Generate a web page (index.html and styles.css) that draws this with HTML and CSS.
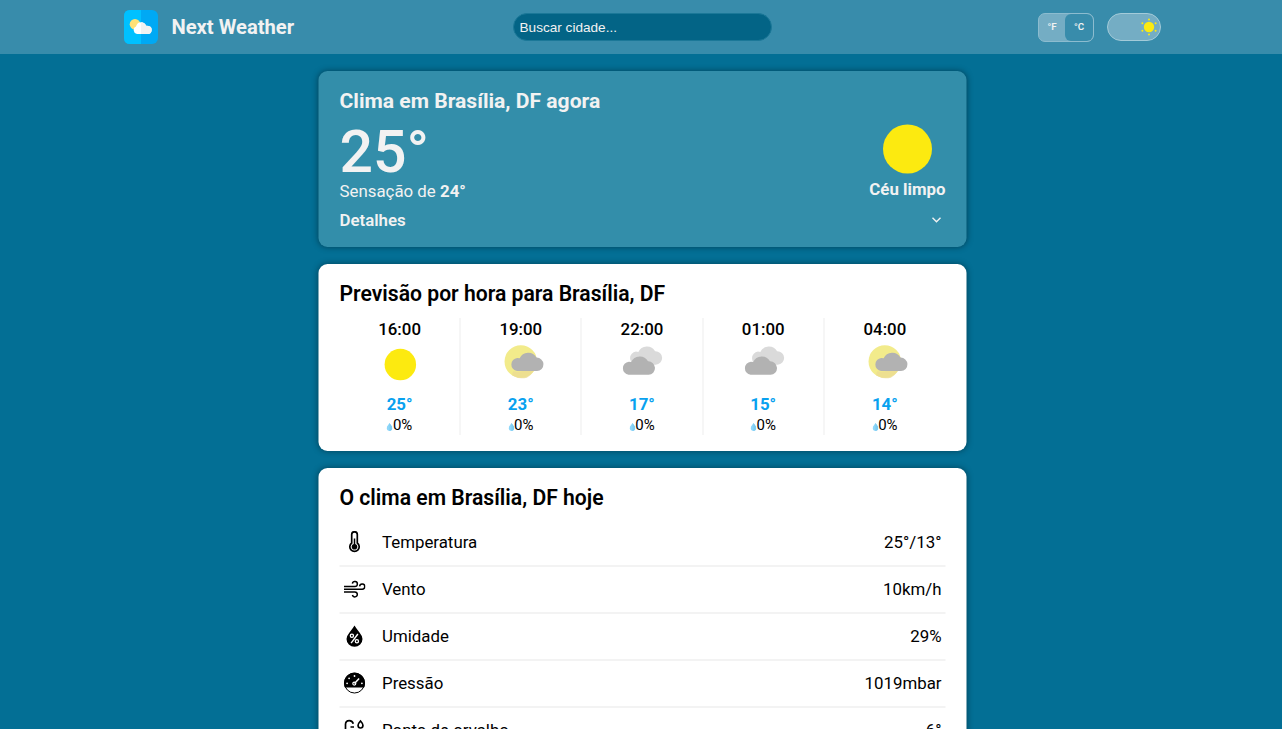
FILE: index.html
```html
<!DOCTYPE html>
<html lang="pt-BR">
<head>
<meta charset="utf-8">
<title>Next Weather</title>
<link rel="stylesheet" href="styles.css">
</head>
<body>
<svg class="defs" width="0" height="0" aria-hidden="true">
  <symbol id="cloud" viewBox="0 0 33 20" overflow="visible"><path d="M6.5 19.5A6.3 6.3 0 0 1 6.7 7 Q8 7 9 7.4A9 9 0 0 1 25 6.7A6.4 6.4 0 1 1 25.5 19.5Z"/></symbol>
  <symbol id="sun" viewBox="0 0 40 40"><circle cx="20.8" cy="20.5" r="15" fill="#fcea10"/></symbol>
  <symbol id="partly" viewBox="0 0 40 40" overflow="visible"><circle cx="20.3" cy="17.6" r="15.5" fill="#f2eb8b"/><path d="M13 27Q24 29 33 21Q34 29 26 33Q19 35 12 31Z" fill="#ebdc91" opacity=".8"/><use href="#cloud" x="10.2" y="7.2" width="33" height="20" fill="#b2b2b2"/></symbol>
  <symbol id="clouds" viewBox="0 0 40 40" overflow="visible"><use href="#cloud" x="8" y="1.2" width="33" height="20" fill="#dadada"/><use href="#cloud" x="1.2" y="10.8" width="33" height="20" fill="#b2b2b2"/></symbol>
  <symbol id="drop" viewBox="0 0 6 8"><path d="M3 0L5.4 3.5Q6.5 6 4.6 7.5Q3 8.4 1.4 7.5Q-.5 6 .6 3.5Z" fill="#8dd6f9"/><path d="M3 0L5.4 3.5Q6.3 6 4.4 7.6L3 8Z" fill="#7dcbef"/></symbol>
</svg>
<header class="header">
  <div class="brand">
    <svg class="logo" viewBox="0 0 34 34"><rect width="34" height="34" rx="6" fill="#00a9f4"/><path d="M17 0H6Q0 0 0 6V28Q0 34 6 34H17Z" fill="#00c1ff"/><circle cx="11" cy="14.2" r="5.3" fill="#ffe177"/><path d="M13 24A3.9 3.9 0 0 1 12 16.6Q13.2 12.2 17 12.2Q21 12.3 22 15.8Q27.8 15.6 27.7 20Q27.4 24 24 24Z" fill="#fff"/><path d="M17 12.2Q21 12.3 22 15.8Q27.8 15.6 27.7 20Q27.4 24 24 24H17Z" fill="#f2f2f2"/></svg>
    <h1 class="brand-name">Next Weather</h1>
  </div>
  <input class="search" type="text" placeholder="Buscar cidade...">
  <div class="controls">
    <div class="units"><span class="unit">°F</span><span class="unit unit-active">°C</span></div>
    <div class="theme"><svg class="theme-icon" viewBox="0 0 18 18" fill="#fcea10"><circle cx="9" cy="9" r="5.2"/><circle cx="9" cy="1.5" r="1"/><circle cx="9" cy="16.5" r="1"/><circle cx="2.4" cy="5.2" r="1"/><circle cx="15.6" cy="5.2" r="1"/><circle cx="2.4" cy="12.8" r="1"/><circle cx="15.6" cy="12.8" r="1"/></svg></div>
  </div>
</header>
<main class="main">
  <section class="card card-now">
    <h2 class="title title-now">Clima em Brasília, DF agora</h2>
    <div class="now">
      <div>
        <div class="now-temp">25°</div>
        <div class="feels">Sensação de <b>24°</b></div>
      </div>
      <div class="condition">
        <svg class="condition-icon" viewBox="0 0 50 50"><circle cx="25" cy="25" r="24.5" fill="#fcea10"/></svg>
        <b>Céu limpo</b>
      </div>
    </div>
    <div class="details"><span>Detalhes</span><svg class="chevron" viewBox="0 0 10 6"><path d="M1 .8L5 4.8L9 .8" fill="none" stroke="#f2f2f2" stroke-width="1.4"/></svg></div>
  </section>
  <section class="card card-hourly">
    <h2 class="title">Previsão por hora para Brasília, DF</h2>
    <div class="hours">
      <div class="hour"><span class="time">16:00</span><svg class="hour-icon"><use href="#sun"/></svg><b class="temp">25°</b><span class="rain"><svg class="drop"><use href="#drop"/></svg>0%</span></div>
      <div class="hour"><span class="time">19:00</span><svg class="hour-icon"><use href="#partly"/></svg><b class="temp">23°</b><span class="rain"><svg class="drop"><use href="#drop"/></svg>0%</span></div>
      <div class="hour"><span class="time">22:00</span><svg class="hour-icon"><use href="#clouds"/></svg><b class="temp">17°</b><span class="rain"><svg class="drop"><use href="#drop"/></svg>0%</span></div>
      <div class="hour"><span class="time">01:00</span><svg class="hour-icon"><use href="#clouds"/></svg><b class="temp">15°</b><span class="rain"><svg class="drop"><use href="#drop"/></svg>0%</span></div>
      <div class="hour"><span class="time">04:00</span><svg class="hour-icon"><use href="#partly"/></svg><b class="temp">14°</b><span class="rain"><svg class="drop"><use href="#drop"/></svg>0%</span></div>
    </div>
  </section>
  <section class="card card-today">
    <h2 class="title">O clima em Brasília, DF hoje</h2>
    <ul class="stats">
      <li class="stat"><svg class="stat-icon" viewBox="0 0 22 22"><path d="M8.2 12V3.6a2.8 2.8 0 0 1 5.6 0V12a4.7 4.7 0 1 1-5.6 0Z" fill="none" stroke="#000" stroke-width="1.7"/><path d="M11 7.5V15" stroke="#000" stroke-width="1.5"/><circle cx="11" cy="15.8" r="2.8"/></svg><span class="label">Temperatura</span><span>25°/13°</span></li>
      <li class="stat"><svg class="stat-icon" viewBox="0 0 22 22" fill="none" stroke="#000" stroke-width="1.5"><path d="M.5 8.5H11.3A2.5 2.5 0 1 0 8.9 5.6M.5 11.2H18.6A2.6 2.6 0 1 0 16.1 8.3M.5 13.9H11.3A2.5 2.5 0 1 1 8.9 17"/></svg><span class="label">Vento</span><span>10km/h</span></li>
      <li class="stat"><svg class="stat-icon" viewBox="0 0 22 22"><path d="M11 .5Q12.4 3 16 7.4Q19 11 19 14A8 7.7 0 0 1 3 14Q3 11 6 7.4Q9.6 3 11 .5Z"/><path d="M14.4 9L7.6 18.2" stroke="#fff" stroke-width="1.4"/><g fill="none" stroke="#fff" stroke-width="1.3"><circle cx="8.4" cy="10.8" r="1.6"/><circle cx="13.4" cy="16.2" r="1.6"/></g></svg><span class="label">Umidade</span><span>29%</span></li>
      <li class="stat"><svg class="stat-icon" viewBox="0 0 22 22"><circle cx="11" cy="11" r="10" fill="#fff" stroke="#000"/><path d="M1.5 15.6A10.5 10.5 0 1 1 20.5 15.6Z"/><path d="M11 11.4L15.6 6.5" stroke="#fff" stroke-width="1.5"/><circle cx="10.8" cy="11.6" r="1.5" fill="none" stroke="#fff" stroke-width="1.2"/><g fill="#fff"><circle cx="3.6" cy="11.3" r=".9"/><circle cx="5.6" cy="6.3" r=".9"/><circle cx="11" cy="4" r=".9"/><circle cx="18.4" cy="11.3" r=".9"/></g></svg><span class="label">Pressão</span><span>1019mbar</span></li>
      <li class="stat"><svg class="stat-icon" viewBox="0 0 22 22"><g fill="none" stroke="#000" stroke-width="1.7"><path d="M2 13V5.6Q2 1.6 5.8 1.6Q9 1.6 9.8 4.8M2 11a5 5 0 1 0 7 0M7 8H10.5M7 11H10.5M17 2Q14.3 5 14.6 6.6A2.4 2.4 0 0 0 19.4 6.6Q19.7 5 17 2Z"/></g></svg><span class="label">Ponto de orvalho</span><span>6°</span></li>
    </ul>
  </section>
</main>
</body>
</html>
```
FILE: styles.css
```css
* { box-sizing: border-box; }
body {
  margin: 0;
  height: 729px;
  overflow: hidden;
  background: #036f95;
  color: #000;
  font: 16.85px/20px Roboto, sans-serif;
}
h1, h2, ul { margin: 0; padding: 0; }
svg { display: block; flex: none; }
.defs { display: none; }
.header {
  display: grid;
  grid-template-columns: 1fr 259px 1fr;
  align-items: center;
  height: 54px;
  padding: 0 121px 0 124px;
  background: #388cab;
  color: #f2f2f2;
}
.brand { display: flex; align-items: center; gap: 13.4px; }
.logo { width: 34px; height: 34px; }
.brand-name { font-size: 20.2px; font-weight: 700; line-height: 24px; }
.search {
  width: 259px;
  height: 28px;
  padding: 0 5.5px;
  border: 1px solid #1b7898;
  border-radius: 14px;
  background: #036486;
  font: 13.6px "Liberation Sans", sans-serif;
}
.search::placeholder { color: #f2f2f2; opacity: 1; }
.controls { display: flex; justify-content: flex-end; gap: 13px; }
.units {
  display: flex;
  width: 56px;
  height: 29px;
  border: 1px solid #8cbccf;
  border-radius: 7px;
  background: #74adc4;
  font-size: 9.8px;
  font-weight: 600;
  line-height: 26px;
  text-align: center;
  overflow: hidden;
}
.unit { flex: 1; }
.unit-active { flex: 0 0 28px; border-radius: 6px; background: #388cab; }
.theme {
  display: flex;
  align-items: center;
  justify-content: flex-end;
  width: 54px;
  height: 28px;
  padding-right: 2px;
  border: 1px solid #a3cbd9;
  border-radius: 14px;
  background: #74adc4;
}
.theme-icon { width: 18px; height: 18px; }
.main {
  display: flex;
  flex-direction: column;
  gap: 17px;
  width: 648px;
  margin: 17px auto 0;
  transform: translateX(1.5px);
}
.card {
  flex: none;
  padding: 18px 21px 0;
  border-radius: 9px;
  background: #fff;
  box-shadow: 0 0 6px rgba(0, 0, 0, .4);
}
.card-now { height: 176px; background: #338eaa; color: #f2f2f2; }
.card-hourly { height: 187px; }
.card-today { height: 320px; }
.title { font-size: 21.15px; font-weight: 600; line-height: 24px; }
.title-now { font-size: 21.1px; font-weight: 700; }
.now { display: flex; justify-content: space-between; margin-top: 7px; }
.now-temp { font-size: 59px; font-weight: 500; line-height: 63px; }
.feels { margin-top: -2px; line-height: 20px; }
.condition { display: flex; flex-direction: column; align-items: center; gap: 5px; padding-top: 4px; }
.condition-icon { width: 50px; height: 50px; }
.details {
  display: flex;
  align-items: center;
  justify-content: space-between;
  margin-top: 9px;
  padding-right: 4px;
  font-weight: 600;
}
.chevron { width: 10px; height: 6px; }
.hours { display: grid; grid-template-columns: repeat(5, 1fr); height: 117px; margin-top: 12px; }
.hour { display: flex; flex-direction: column; align-items: center; border-right: 1px solid #eee; }
.hour:last-child { border-right: 0; }
.time { margin-top: 1px; font-weight: 500; }
.hour-icon { width: 42px; height: 42px; margin-top: 4px; overflow: visible; }
.temp { margin-top: 9px; color: #08a1ef; }
.rain { display: flex; align-items: center; margin-top: 1px; font-size: 15px; }
.drop { width: 6px; height: 8px; margin-top: 4px; }
.stats { margin-top: 10px; list-style: none; }
.stat {
  display: flex;
  align-items: center;
  height: 47px;
  padding: 0 4px 2px;
  border-bottom: 2px solid #f3f3f3;
}
.stat-icon { width: 22px; height: 22px; }
.label { flex: 1; margin-left: 16.5px; }
```
